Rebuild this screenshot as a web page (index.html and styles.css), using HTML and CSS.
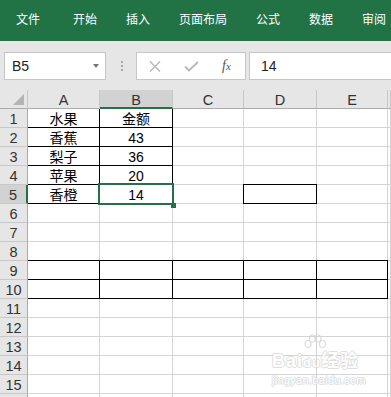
FILE: index.html
```html
<!DOCTYPE html>
<html lang="zh-CN">
<head>
    <meta charset="UTF-8">
    <meta name="viewport" content="width=device-width, initial-scale=1.0">
    <title>Excel</title>
    <link rel="stylesheet" href="styles.css">
</head>
<body>
    <!-- Ribbon tabs -->
    <div class="ribbon">
        <span class="tab">文件</span>
        <span class="tab tab-second">开始</span>
        <span class="tab">插入</span>
        <span class="tab">页面布局</span>
        <span class="tab">公式</span>
        <span class="tab">数据</span>
        <span class="tab">审阅</span>
    </div>

    <!-- Formula bar -->
    <div class="formula-bar">
        <div class="name-box">
            <span>B5</span>
            <i class="caret"></i>
        </div>
        <div class="grip"><i></i><i></i><i></i></div>
        <div class="fx-box">
            <svg class="btn-x" width="12" height="11" viewBox="0 0 12 11">
                <path d="M1 0.5 L11 10.5 M11 0.5 L1 10.5" stroke="#b8b8b8" stroke-width="1.4" fill="none"/>
            </svg>
            <svg class="btn-ok" width="15" height="11" viewBox="0 0 15 11">
                <path d="M1 5.5 L5 9.5 L14 1" stroke="#b8b8b8" stroke-width="1.8" fill="none"/>
            </svg>
            <span class="fx">f<span class="fx-x">x</span></span>
        </div>
        <div class="fx-input">14</div>
    </div>

    <!-- Sheet -->
    <div class="sheet">
        <div class="ch corner">
            <svg width="11" height="11" viewBox="0 0 11 11"><path d="M11 0 L11 11 L0 11 Z" fill="#b4b4b4"/></svg>
        </div>
        <div class="ch">A</div><div class="ch on">B</div><div class="ch">C</div><div class="ch">D</div><div class="ch">E</div><div class="ch"></div>

        <div class="rh">1</div><div class="bx">水果</div><div class="bx">金额</div><div></div><div></div><div></div><div></div>
        <div class="rh">2</div><div class="bx">香蕉</div><div class="bx">43</div><div></div><div></div><div></div><div></div>
        <div class="rh">3</div><div class="bx">梨子</div><div class="bx">36</div><div></div><div></div><div></div><div></div>
        <div class="rh">4</div><div class="bx">苹果</div><div class="bx">20</div><div></div><div></div><div></div><div></div>
        <div class="rh on">5</div><div class="bx">香橙</div><div class="bx cur">14<span class="sel"><i class="handle"></i></span></div><div></div><div class="bx"></div><div></div><div></div>
        <div class="rh">6</div><div></div><div></div><div></div><div></div><div></div><div></div>
        <div class="rh">7</div><div></div><div></div><div></div><div></div><div></div><div></div>
        <div class="rh">8</div><div></div><div></div><div></div><div></div><div></div><div></div>
        <div class="rh">9</div><div class="bx"></div><div class="bx"></div><div class="bx"></div><div class="bx"></div><div class="bx"></div><div></div>
        <div class="rh">10</div><div class="bx"></div><div class="bx"></div><div class="bx"></div><div class="bx"></div><div class="bx"></div><div></div>
        <div class="rh">11</div><div></div><div></div><div></div><div></div><div></div><div></div>
        <div class="rh">12</div><div></div><div></div><div></div><div></div><div></div><div></div>
        <div class="rh">13</div><div></div><div></div><div></div><div></div><div></div><div></div>
        <div class="rh">14</div><div></div><div></div><div></div><div></div><div></div><div></div>
        <div class="rh">15</div><div></div><div></div><div></div><div></div><div></div><div></div>
        <div class="rh"></div><div></div><div></div><div></div><div></div><div></div><div></div>
    </div>

    <!-- Watermark -->
    <div class="watermark">
        <svg class="wm-paw" width="26" height="20" viewBox="0 0 26 20">
            <g fill="none" stroke="#d6d6d6" stroke-width="1.2">
                <ellipse cx="6" cy="10" rx="3" ry="3.5"/>
                <ellipse cx="10.5" cy="4.5" rx="3" ry="3.5"/>
                <ellipse cx="16" cy="4.5" rx="3" ry="3.5"/>
                <ellipse cx="20.5" cy="10" rx="3" ry="3.5"/>
            </g>
        </svg>
        <div class="wm-logo">Bai<span class="wm-du">du</span>经验</div>
        <div class="wm-url">jingyan.baidu.com</div>
    </div>
</body>
</html>
```

FILE: styles.css
```css
* {
    margin: 0;
    padding: 0;
    box-sizing: border-box;
}

body {
    width: 391px;
    height: 397px;
    overflow: hidden;
    position: relative;
    background: #fff;
    font-family: 'Liberation Sans', 'Noto Sans CJK SC', sans-serif;
}

/* Ribbon */
.ribbon {
    height: 41px;
    background-color: #217346;
    display: flex;
    align-items: flex-start;
    gap: 29px;
    padding: 12px 0 0 16px;
    color: #fff;
    font-family: 'Noto Sans CJK SC', sans-serif;
    font-size: 12px;
    line-height: 13px;
    white-space: nowrap;
    overflow: hidden;
}

.tab-second {
    margin-left: 4px;
}

/* Formula bar */
.formula-bar {
    height: 49px;
    background-color: #e6e6e6;
    display: flex;
    align-items: flex-start;
    padding-top: 11px;
    overflow: hidden;
}

.name-box {
    margin-left: 4px;
    width: 102px;
    height: 28px;
    background: #fff;
    border: 1px solid #c6c6c6;
    display: flex;
    align-items: center;
    justify-content: space-between;
    padding: 0 6px 0 7px;
    font-size: 14px;
    color: #222;
}

.caret {
    width: 0;
    height: 0;
    border-left: 3px solid transparent;
    border-right: 3px solid transparent;
    border-top: 4px solid #777;
}

.grip {
    width: 30px;
    height: 28px;
    display: flex;
    flex-direction: column;
    align-items: center;
    justify-content: center;
    gap: 2px;
    padding-left: 1px;
}

.grip i {
    width: 2px;
    height: 2px;
    background: #a8a8a8;
}

.fx-box {
    width: 110px;
    height: 28px;
    background: #fff;
    border: 1px solid #c6c6c6;
    display: flex;
    align-items: center;
}

.btn-x {
    margin-left: 12px;
}

.btn-ok {
    margin-left: 23px;
}

.fx {
    margin-left: 23px;
    font-family: 'Liberation Serif', serif;
    font-style: italic;
    font-size: 14px;
    color: #555;
}

.fx-x {
    font-size: 11px;
}

.fx-input {
    margin-left: 3px;
    flex: 1;
    height: 28px;
    margin-right: -4px;
    background: #fff;
    border: 1px solid #c6c6c6;
    padding-left: 11px;
    font-size: 14px;
    line-height: 26px;
    color: #222;
}

/* Sheet grid */
.sheet {
    display: grid;
    grid-template-columns: 28px 72px 73px 71px 73px 71px minmax(0, 1fr);
    grid-auto-rows: 19px;
    width: 100%;
}

.sheet > div {
    border-right: 1px solid #d4d4d4;
    border-bottom: 1px solid #d4d4d4;
    font-size: 14px;
    line-height: 18px;
    padding-top: 1px;
    text-align: center;
    color: #000;
}

.sheet > .ch,
.sheet > .rh {
    position: relative;
    background: #e6e6e6;
    color: #333;
    font-size: 14.5px;
}

.sheet > .ch {
    border-right-color: #c8c8c8;
    border-bottom-color: #ababab;
}

.sheet > .rh {
    border-right-color: #ababab;
    border-bottom-color: #c8c8c8;
}

.sheet > .ch.on {
    background: #d2d2d2;
    border-bottom: 2px solid #217346;
}

.sheet > .rh.on {
    background: #d2d2d2;
    border-right: 2px solid #217346;
}

.corner svg {
    position: absolute;
    right: 3px;
    bottom: 3px;
}

/* Cells with a thin black border */
.sheet > .bx {
    border-right-color: #000;
    border-bottom-color: #000;
    box-shadow: 0 -1px #000, -1px 0 #000, -1px -1px #000;
}

.sheet > .cur {
    position: relative;
}

.sel {
    position: absolute;
    inset: -2px;
    border: 2px solid #217346;
    z-index: 2;
}

.handle {
    position: absolute;
    right: -4px;
    bottom: -5px;
    width: 5px;
    height: 5px;
    background: #217346;
}

/* Watermark */
.watermark {
    position: absolute;
    left: 272px;
    top: 340px;
    color: #fff;
    text-shadow: 1px 0 #d9d9d9, -1px 0 #d9d9d9, 0 1px #d9d9d9, 0 -1px #d9d9d9;
    z-index: 5;
    opacity: 0.85;
}

.wm-paw {
    position: absolute;
    left: 30px;
    top: -6px;
}

.wm-logo {
    margin-top: 10px;
    font-size: 18px;
    font-weight: bold;
    line-height: 22px;
    letter-spacing: 1px;
}

.wm-du {
    font-size: 13px;
}

.wm-url {
    font-size: 11px;
    line-height: 13px;
    letter-spacing: 0.3px;
}
```
